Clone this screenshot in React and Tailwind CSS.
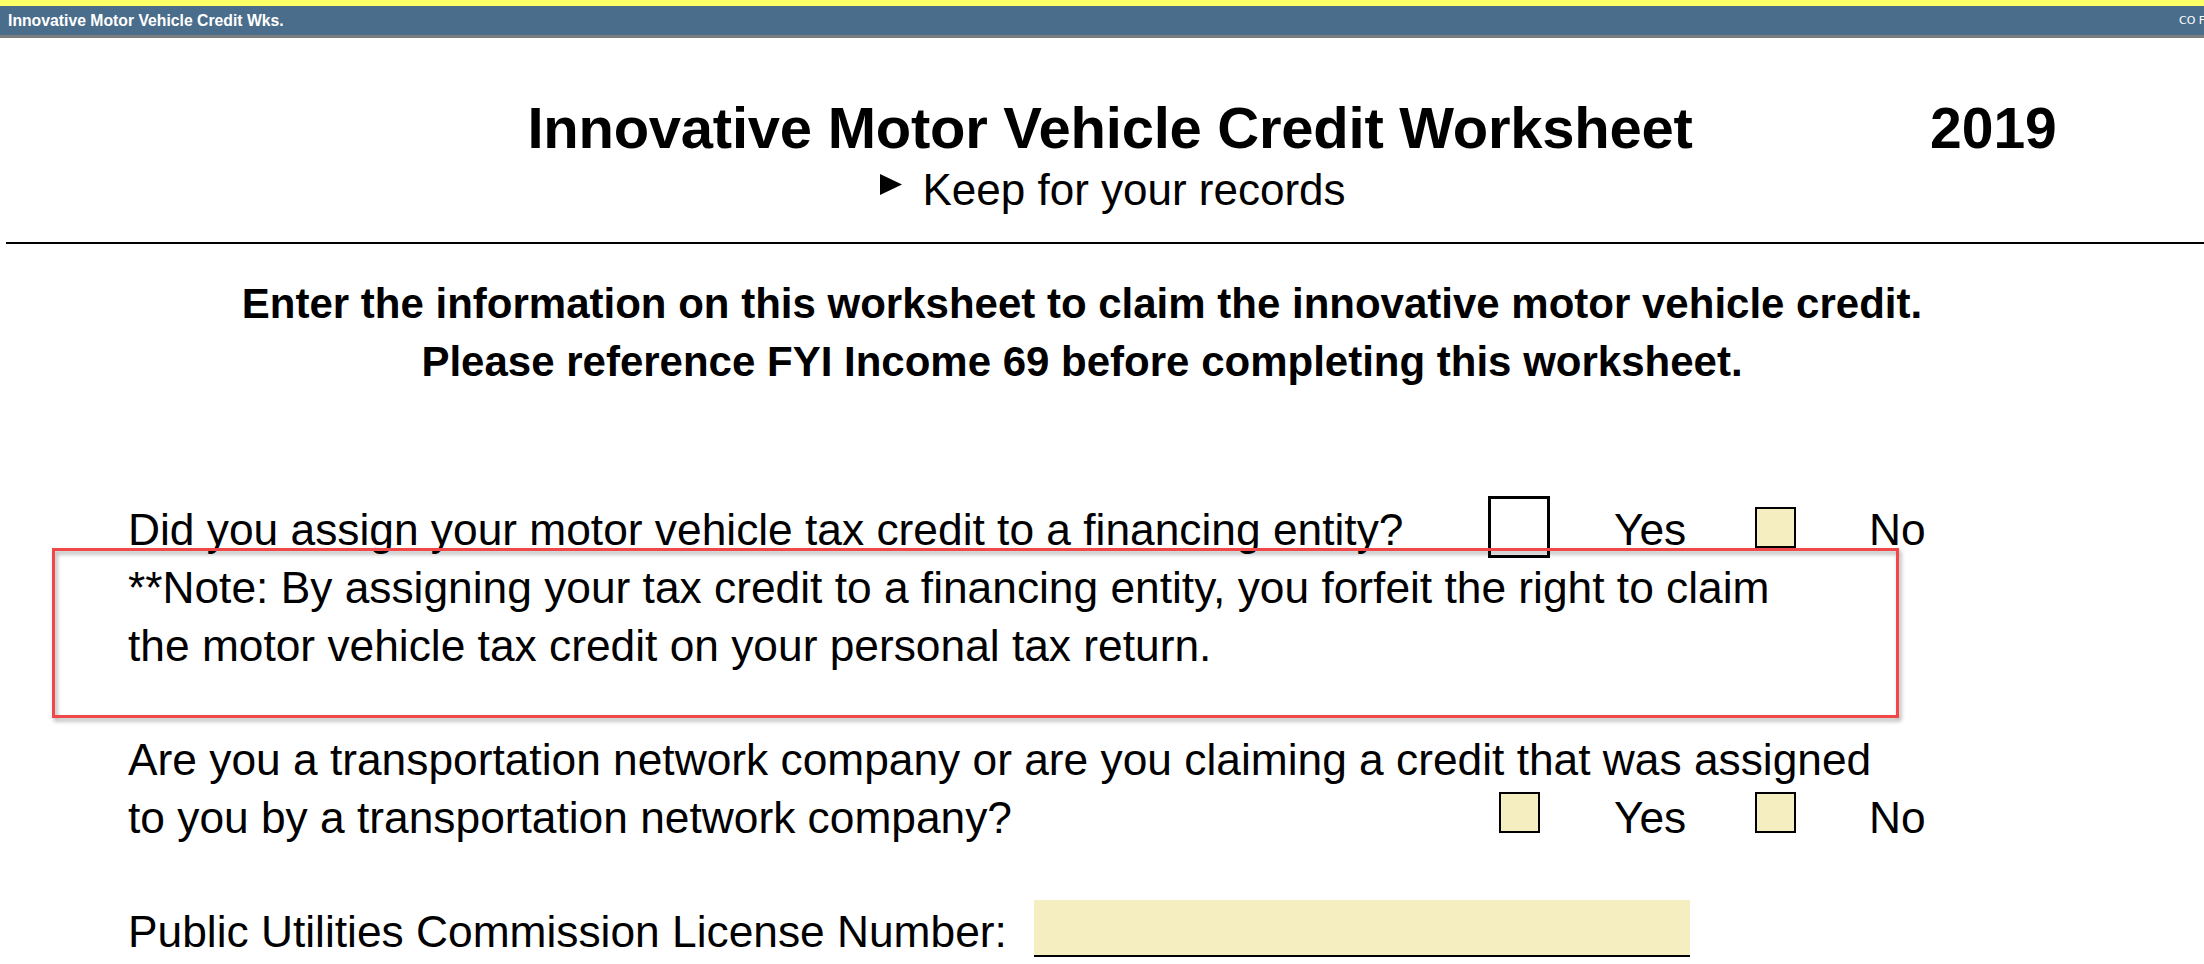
import React from "react";

const Box = ({ className = "" }) => (
  <div className={"w-[41px] h-[41px] border-2 border-black bg-[#f4eec0] " + className} />
);

const YesNo = ({ first, boxTop }) => (
  <div className="flex items-start">
    <div className="w-[115px]">{first}</div>
    <div className="w-[141px]">Yes</div>
    <div className="w-[114px]">
      <Box className={boxTop} />
    </div>
    <div>No</div>
  </div>
);

export default function App() {
  return (
    <div className="relative w-[2204px] h-[964px] overflow-hidden bg-white text-black font-['Liberation_Sans',Arial,sans-serif]">
      <div className="h-[6px] bg-[#ffff66]" />
      <div className="flex items-center justify-between h-[32px] pl-[8px] bg-[#4a6d8b] border-b-[3px] border-[#7d7d7d]">
        <span className="text-[15.75px] leading-none font-bold text-white">
          Innovative Motor Vehicle Credit Wks.
        </span>
        <span className="w-[25px] overflow-hidden whitespace-nowrap text-[11px] leading-none text-white font-['DejaVu_Sans',sans-serif]">
          CO Form 104
        </span>
      </div>

      <div className="flex items-start mt-[55px]">
        <div className="w-[1930px] pl-[290px] text-center text-[58px] leading-[70px] font-bold tracking-[-0.25px]">
          Innovative Motor Vehicle Credit Worksheet
        </div>
        <div className="text-[57px] leading-[70px] font-bold">2019</div>
      </div>

      <div className="flex justify-center pl-[22px] mt-[2px]">
        <div className="flex items-start">
          <svg width="22" height="21" viewBox="0 0 22 21" className="mt-[9px] mr-[20px]">
            <polygon points="0,0 22,10.5 0,21" fill="#000" />
          </svg>
          <span className="text-[44px] leading-[50px]">Keep for your records</span>
        </div>
      </div>

      <div className="h-[2px] ml-[6px] mt-[27px] bg-black" />

      <div className="mt-[31px] pr-[40px] text-center text-[42px] leading-[58px] font-bold">
        Enter the information on this worksheet to claim the innovative motor vehicle credit.
        <br />
        Please reference FYI Income 69 before completing this worksheet.
      </div>

      <div className="mt-[110px] pl-[128px] text-[44.3px] leading-[58px]">
        {/* assigned to financing entity */}
        <div className="flex items-start">
          <div className="w-[1371px]">Did you assign your motor vehicle tax credit to a financing entity?</div>
          <YesNo
            first={<div className="w-[62px] h-[62px] mt-[-5px] ml-[-11px] border-[3px] border-black bg-white" />}
            boxTop="mt-[6px]"
          />
        </div>
        <div>
          **Note: By assigning your tax credit to a financing entity, you forfeit the right to claim
          <br />
          the motor vehicle tax credit on your personal tax return.
        </div>

        <div className="mt-[56px]">
          Are you a transportation network company or are you claiming a credit that was assigned
        </div>
        <div className="flex items-start">
          <div className="w-[1371px]">to you by a transportation network company?</div>
          <YesNo first={<Box className="mt-[3px]" />} boxTop="mt-[3px]" />
        </div>

        <div className="flex items-start mt-[56px]">
          <div className="w-[906px]">Public Utilities Commission License Number:</div>
          <div className="w-[656px] h-[57px] mt-[-3px] bg-[#f4eec0] border-b-2 border-black" />
        </div>
      </div>

      <div className="absolute left-[52px] top-[548px] w-[1847px] h-[170px] border-[3px] border-[#f04848] drop-shadow-[2px_3px_2px_rgba(0,0,0,0.35)]" />
    </div>
  );
}
